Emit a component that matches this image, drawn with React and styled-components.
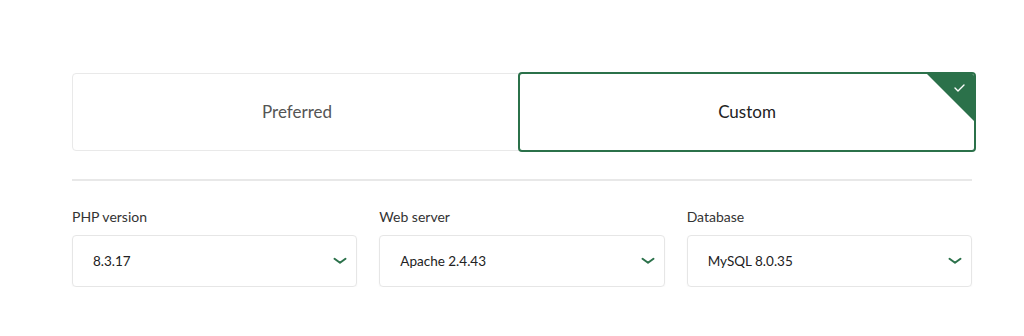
import styled, { createGlobalStyle } from "styled-components";

const GlobalStyle = createGlobalStyle`
  body {
    margin: 0;
    background: #fff;
    font-family: Lato, "Open Sans", "Liberation Sans", sans-serif;
  }
`;

const green = "#2b714a";

const Page = styled.div`
  width: 900px;
  padding: 73px 0 0 72px;
`;

const Cards = styled.div`
  display: grid;
  grid-template-columns: 1fr 1fr;
`;

const Card = styled.div`
  position: relative;
  display: flex;
  align-items: center;
  justify-content: center;
  height: 76px;
  padding-bottom: 2px;
  box-sizing: border-box;
  height: 78px;
  border: 1px solid #e9e9e9;
  border-radius: 4px;
  font-size: 17px;
  color: #555;
  overflow: hidden;
  background: #fff;

  ${(p) =>
    p.$selected &&
    `
    border: 2px solid ${green};
    margin: -1px -4px -1px -4px;
    height: 80px;
    color: #222;
    z-index: 1;
  `}
`;

const Corner = styled.span`
  position: absolute;
  top: 0;
  right: 0;
  width: 47px;
  height: 47px;
  background: ${green};
  clip-path: polygon(0 0, 100% 0, 100% 100%);

  svg {
    position: absolute;
    top: 10px;
    right: 9px;
  }
`;

const Divider = styled.hr`
  border: none;
  height: 2px;
  background: #e8e8e8;
  margin: 28px 0 27px;
`;

const Fields = styled.div`
  display: grid;
  grid-template-columns: repeat(3, 1fr);
  gap: 22px;
`;

const Field = styled.div`
  display: flex;
  flex-direction: column;
`;

const Label = styled.label`
  font-size: 14px;
  line-height: 17px;
  color: #333;
  margin-bottom: 10px;
`;

const Select = styled.div`
  display: flex;
  align-items: center;
  justify-content: space-between;
  height: 50px;
  padding: 0 9px 0 20px;
  border: 1px solid #e6e6e6;
  border-radius: 4px;
  box-shadow: 0 1px 2px rgba(0, 0, 0, 0.04);
  font-size: 13.5px;
  color: #222;
`;

const Chevron = () => (
  <svg width="14" height="8" viewBox="0 0 14 8" fill="none">
    <path d="M1.5 1.8 7 5.8l5.5-4" stroke={green} strokeWidth="2" strokeLinecap="round" strokeLinejoin="round" />
  </svg>
);

const fields = [
  { label: "PHP version", value: "8.3.17" },
  { label: "Web server", value: "Apache 2.4.43" },
  { label: "Database", value: "MySQL 8.0.35" },
];

export default function App() {
  return (
    <>
      <GlobalStyle />
      <Page>
        <Cards>
          <Card>Preferred</Card>
          <Card $selected>
            Custom
            <Corner>
              <svg width="11" height="8" viewBox="0 0 11 8" fill="none">
                <path d="M1 4l3 3 6-6" stroke="#fff" strokeWidth="1.4" strokeLinecap="round" strokeLinejoin="round" />
              </svg>
            </Corner>
          </Card>
        </Cards>
        <Divider />
        <Fields>
          {fields.map((f) => (
            <Field key={f.label}>
              <Label>{f.label}</Label>
              <Select>
                <span>{f.value}</span>
                <Chevron />
              </Select>
            </Field>
          ))}
        </Fields>
      </Page>
    </>
  );
}
